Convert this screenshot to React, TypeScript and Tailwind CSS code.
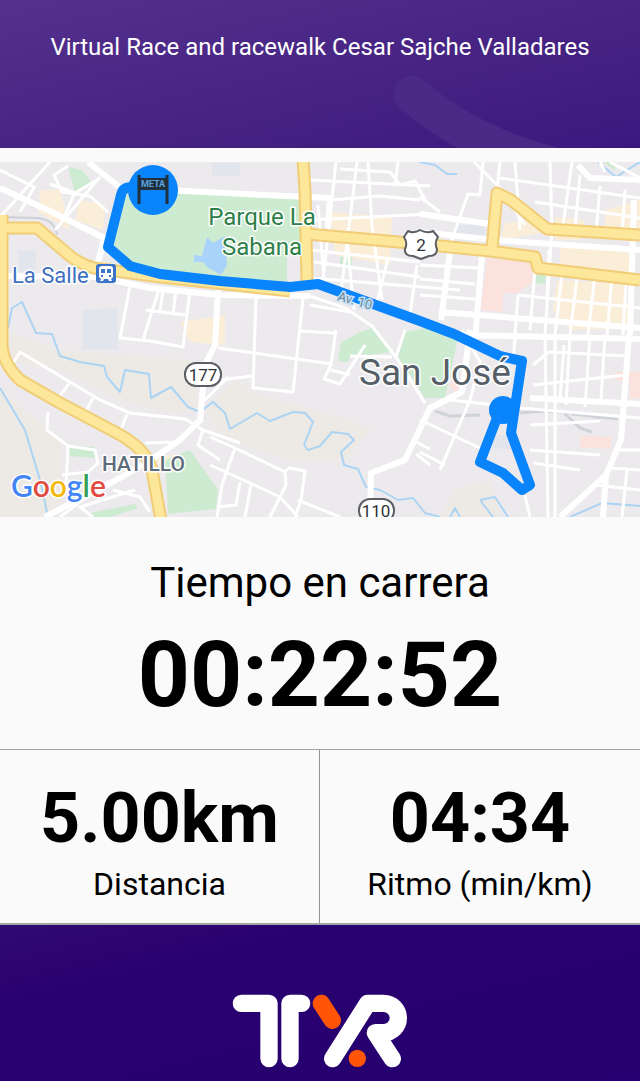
import React from 'react';

interface StatProps {
  value: string;
  label: string;
}

const minorRoads = [
  'M0 170 L34 187 M50 162 L0 217 M100 177 L55 230 M68 166 L54 175 L62 192 L90 196 M35 186 L20 212 M75 192 L62 222',
  'M90 196 L108 212 M50 184 L75 193 L100 178',
  'M130 286 L120 338 L150 341 L183 347 L190 290 M160 286 L146 330 L143 341 M146 310 L185 315 M163 290 L160 312 M176 290 L173 314',
  'M13 363 L20 352 L70 382 L100 400 L130 413 L185 419 L203 430 L240 443 M70 382 L60 396 M93 398 L84 415 M127 414 L120 432',
  'M48 412 L47 430 L68 446 L66 485 M68 446 L95 450 L98 463 L88 472 L62 475 M145 443 L175 442 L203 420',
  'M203 430 L198 445 L220 460 M113 490 L140 497 L150 512 M93 517 L80 507 L135 490 M60 517 L85 498',
  'M256 296 L253 388 L293 392 L303 298 M218 348 L332 364 M300 331 L334 333 M220 380 L252 376 M228 377 L205 400',
  'M336 330 L331 365 L324 379 L340 384 L365 345 M331 370 L350 375',
  'M310 296 L345 308 L372 326 L392 352 M372 326 L398 360 L425 403 M405 330 L396 357 M350 356 L392 357',
  'M210 437 L235 448 L285 472 L289 468 L305 471 L301 500 L295 517 M285 472 L286 485 L270 517 M235 448 L222 485 L217 517',
  'M210 465 L250 483 L280 497 L298 517 M298 500 L340 517 M240 482 L236 505 L218 507 M251 485 L245 517',
  'M336 162 L322 290 M357 162 L340 300 M368 162 L372 225 L382 300 M310 180 L430 186 M310 220 L430 214 M310 250 L420 262',
  'M346 230 L354 310 M310 278 L460 290 M388 258 L375 310 M417 265 L410 315 M314 262 L420 277 M340 169 L390 172 L400 185 L415 181 L427 203',
  'M310 305 L350 312 M318 205 L325 290 M398 162 L395 185 M330 200 L380 196 L420 200',
  'M483 162 L480 195 L468 194 L450 245 M474 162 L500 188 L525 225 M500 162 L496 200 M550 162 L552 230 L545 335 M572 162 L563 225',
  'M580 175 L575 228 M600 186 L596 232 M625 190 L622 235 M500 178 L640 198 M535 202 L640 218 M420 197 L440 212',
  'M420 265 L480 268 M420 279 L475 284 M420 295 L475 299 M518 295 L640 308 M518 295 L515 335 M563 265 L555 335 M578 270 L570 335',
  'M595 275 L588 335 M612 275 L607 335 M535 270 L530 330 M626 282 L623 335 M549 250 L547 300',
  'M545 335 L548 517 M555 335 L555 517 M570 335 L566 405 M590 335 L585 407 M605 335 L601 400 M515 338 L513 362 M533 365 L549 352 L628 356',
  'M450 400 L520 408 L640 418 M462 330 L480 362 L470 400 L440 470 M420 452 L445 465 M530 450 L600 455 M533 463 L580 470 M420 420 L480 448',
  'M533 385 L625 375 M530 425 L600 421 M525 495 L530 517 M615 450 L640 450 M640 470 L610 468 M627 470 L622 517 M595 485 L640 490 M564 345 L560 400',
  'M412 440 L430 449 M416 454 L430 465 M515 162 L520 230 M610 162 L640 178 M600 162 L605 172',
];

const mainRoads = [
  'M0 188 L52 212 L108 240',
  'M88 162 L123 190',
  'M165 190 L225 193 L330 198 L328 228',
  'M105 235 L98 262 M0 276 L98 277 L150 288 L220 295 L310 296',
  'M218 290 L215 345 L205 365 L200 420 L180 440 L155 457 L120 478 L45 517',
  'M370 517 L371 473 L405 460 L430 408 L462 392 L470 330',
  'M420 214 L490 224 M420 232 L495 240 L640 250 M440 312 L640 328 M450 252 L441 320 M482 255 L475 340 M460 335 L640 339',
  'M640 180 L590 178 L578 165 M634 200 L630 335 M629 335 L621 440 L606 475 L603 517 M606 475 L560 517 M530 398 L640 404',
];

const highways = [
  'M0 228 L37 228 L70 256 Q80 264 94 268 L160 277 L290 291',
  'M2 215 L2 345 Q3 364 20 380 L60 403 L115 432 Q146 448 152 470 L161 520',
  'M303 160 L305 190 L307 282',
  'M307 234 L410 243 L490 251 L535 257 L538 268 L640 280',
  'M492 250 L497 193 L511 200 L547 229 L640 235',
];

const rivers = [
  'M8 328 L12 308 L22 302 L36 333 L52 334 L60 356 L80 362 L104 366 L107 377 L120 392 L125 370 L149 374 L151 398 L171 387 L188 407 L200 412 L213 402 L225 413 L230 429 L257 413 L270 421 L293 412 L305 413 L313 422 L304 445 L308 450 L320 446 L332 432 L348 434 L354 440 L341 452 L344 465 L358 469 L366 487 L380 490 L398 500 L413 498 L425 513 L440 517',
  'M0 388 L25 430 L40 480 L48 517',
  'M450 517 L455 508 L460 517 M480 500 L495 497 L508 517 M480 500 L493 517 M570 517 L602 503 L640 506',
  'M420 162 L435 165 L447 174 L457 174 M598 162 L616 177 L640 162',
];

const route =
  'M153 187 L130 187 Q122 188 121 195 L108 247 L130 266 L160 274 L220 281 L290 287 L318 284 L420 321 L454 334 L500 356 L522 361 L511 433 L530 485 L522 490 L503 473 L480 462 L500 410';

const RouteMap: React.FC = () => (
  <svg
    viewBox="0 162 640 355"
    className="block w-full font-[Roboto,sans-serif]"
    role="img"
    aria-label="Mapa del recorrido"
  >
    <rect y="162" width="640" height="355" fill="#edeaee" />

    {/* land use */}
    <g fill="#edeae5">
      <path d="M0 330 L60 350 L190 360 L200 405 L180 415 L120 400 L60 370 L0 360Z" />
      <path d="M235 380 L260 395 L350 420 L370 430 L345 460 L290 460 L225 440 L205 410Z" />
      <path d="M0 390 L60 440 L60 517 L0 517Z M455 490 L490 480 L500 517 L440 517Z" />
    </g>
    <g fill="#faeed8">
      <path d="M40 190 L60 190 L70 230 L38 212Z M80 200 L105 205 L103 230 L75 220Z" />
      <path d="M180 322 L225 315 L225 345 L190 342Z M330 212 L392 217 L390 265 L335 255Z" />
      <path d="M505 223 L530 220 L545 232 L500 240Z M555 217 L585 220 L580 240 L555 240Z M605 210 L640 200 L640 238 L605 235Z" />
      <path d="M560 245 L630 252 L630 275 L560 268Z M557 280 L625 284 L630 328 L570 330 L553 310Z M150 455 L175 455 L165 470Z" />
    </g>
    <g fill="#fbe2dc">
      <path d="M487 258 L530 262 L533 282 L515 294 L503 292 L503 312 L481 310Z" />
      <path d="M580 436 L612 437 L610 449 L580 447Z M615 372 L640 372 L640 398 L630 398 L630 382 L615 380Z M449 385 L458 376 L458 395Z" />
    </g>
    <g fill="#e2e6ec">
      <path d="M18 250 L36 250 L36 272 L18 272Z M82 310 L118 308 L118 350 L82 350Z M212 163 L240 163 L240 176 L212 176Z" />
      <path d="M455 225 L485 225 L485 237 L455 235Z M495 435 L512 435 L512 450 L492 448Z" />
    </g>
    <g fill="#cdebd0">
      <path d="M123 190 L300 198 L302 250 L287 250 L287 284 L220 280 L135 264 L108 245Z" />
      <path d="M68 167 L82 170 L92 183 L75 192Z M358 333 L375 327 L392 352 L350 357 L348 362 L338 361 L341 343Z" />
      <path d="M405 332 L430 327 L458 338 L445 398 L425 398 L398 357Z M340 257 L352 257 L352 269 L340 269Z" />
      <path d="M533 274 L546 275 L545 284 L533 283Z M603 162 L615 162 L615 170Z M68 446 L95 447 L95 458 L70 456Z" />
      <path d="M165 460 L190 450 L218 490 L216 509 L168 514Z M90 513 L135 504 L138 508 L110 517 L92 517Z" />
    </g>
    <path
      d="M194 255 L202 256 L207 237 L213 243 L225 236 L227 265 L221 275 L207 267 L203 262 L194 262Z"
      fill="#a9d3fa"
    />
    <path
      d="M435 411 L450 416 L480 415 M520 413 Q560 408 600 418 M562 411 L580 428 L592 432 M572 414 L618 419"
      fill="none"
      stroke="#cfd3d8"
      strokeWidth="3"
    />
    <path d="M0 217 L38 218 Q55 220 57 235" fill="none" stroke="#cdd0d4" strokeWidth="2" />

    <g fill="none" stroke="#abd4f4" strokeWidth="2" strokeLinejoin="round">
      {rivers.map((d) => (
        <path key={d} d={d} />
      ))}
    </g>
    <g fill="none" stroke="#fff" strokeLinejoin="round">
      {minorRoads.map((d) => (
        <path key={d} d={d} strokeWidth="3" />
      ))}
      {mainRoads.map((d) => (
        <path key={d} d={d} strokeWidth="6" />
      ))}
    </g>
    <g fill="none" strokeLinejoin="round">
      {highways.map((d) => (
        <path key={d} d={d} stroke="#f0cd76" strokeWidth="13" />
      ))}
      {highways.map((d) => (
        <path key={d} d={d} stroke="#fde79a" strokeWidth="9" />
      ))}
    </g>

    <path d={route} fill="none" stroke="#0a84fb" strokeWidth="10" strokeLinejoin="round" />
    <circle cx="503" cy="410" r="14" fill="#0a84fb" />
    <circle cx="153" cy="190" r="25" fill="#0a84fb" />

    {/* finish banner */}
    <path d="M138 178 H168 V190 H138Z" fill="#20303c" />
    <path d="M139 175 V204 M167 175 V204" stroke="#20303c" strokeWidth="3" />
    <text x="153" y="187" fontSize="9" fontWeight="700" fill="#5aa2dd" textAnchor="middle">
      META
    </text>

    {/* road shields */}
    <path
      d="M408 231 Q414 234 420 230 Q427 234 433 231 L438 237 Q434 243 437 249 Q437 256 429 256 L421 259 L413 256 Q404 256 405 249 Q408 243 404 237Z"
      fill="#fff"
      stroke="#5b5f63"
      strokeWidth="2"
      strokeLinejoin="round"
    />
    <rect x="185" y="363" width="36" height="23" rx="11" fill="#fff" stroke="#5b5f63" strokeWidth="2" />
    <rect x="359" y="499" width="35" height="23" rx="11" fill="#fff" stroke="#5b5f63" strokeWidth="2" />
    <g fontSize="17" fill="#2f3336" textAnchor="middle">
      <text x="421" y="251">2</text>
      <text x="203" y="381">177</text>
      <text x="376" y="517">110</text>
    </g>

    {/* place names */}
    <g stroke="#fff" strokeWidth="3" strokeLinejoin="round" paintOrder="stroke">
      <g fontSize="24" fill="#2c8048" textAnchor="middle">
        <text x="262" y="225">Parque La</text>
        <text x="262" y="255">Sabana</text>
      </g>
      <text x="12" y="283" fontSize="22" fill="#3b6fc0">
        La Salle
      </text>
      <text x="359" y="385" fontSize="37" fill="#565f68">
        San José
      </text>
      <text x="102" y="471" fontSize="21" fontWeight="500" fill="#5d6c7b">
        HATILLO
      </text>
      <text
        x="11"
        y="497"
        fontSize="30"
        fontWeight="600"
        className="font-[Lato,sans-serif]"
      >
        <tspan fill="#4285f4">G</tspan>
        <tspan fill="#e04a3f">o</tspan>
        <tspan fill="#f2b90f">o</tspan>
        <tspan fill="#4285f4">g</tspan>
        <tspan fill="#34a056">l</tspan>
        <tspan fill="#e04a3f">e</tspan>
      </text>
    </g>
    <text
      x="337"
      y="300"
      fontSize="13"
      fill="#6f8796"
      stroke="#c5e2f8"
      strokeWidth="3"
      paintOrder="stroke"
      transform="rotate(16 337 300)"
    >
      Av. 10
    </text>

    {/* train station */}
    <rect x="96" y="264" width="20" height="19" rx="3" fill="#3b73c8" />
    <path d="M102 266 H110 Q113 266 113 269 V277 L111 279 L112 281 H109 L108 279 H104 L103 281 H100 L101 279 L99 277 V269 Q99 266 102 266Z" fill="#fff" />
    <path d="M101 269 H105 V273 H101Z M107 269 H111 V273 H107Z M101 275 H103 V277 H101Z M109 275 H111 V277 H109Z" fill="#3b73c8" />
  </svg>
);

const TyrLogo: React.FC = () => (
  <svg viewBox="36 41 528 222" className="w-44" role="img" aria-label="TYR">
    <g fill="none" stroke="#fff" strokeWidth="52" strokeLinecap="round" strokeLinejoin="round">
      <path d="M64 69 H147 V235" />
      <path d="M245 69 H210 V235" />
      <path d="M338 235 L443 69 H491 A44 44 0 0 1 491 157 H466 L517 235" />
      <path d="M304 69 L337 120" stroke="#ff5505" />
    </g>
    <circle cx="412" cy="234" r="26" fill="#ff5505" />
  </svg>
);

const Stat: React.FC<StatProps> = ({ value, label }) => (
  <div className="flex flex-col items-center pt-8 pb-[19px]">
    <span className="text-[70px] leading-[72px] font-bold">{value}</span>
    <span className="mt-2.5 text-[32px] leading-10">{label}</span>
  </div>
);

export default function App() {
  return (
    <div className="flex min-h-screen flex-col bg-[#290070] font-[Roboto,sans-serif] text-black">
      <header className="relative overflow-hidden bg-linear-to-br from-[#54318e] via-[#482584] to-[#3b187e] px-4 pt-8 pb-[86px] text-center">
        <svg viewBox="0 0 640 148" className="absolute inset-0 h-full w-full" aria-hidden="true">
          <path
            d="M412 94 Q475 150 580 172"
            fill="none"
            stroke="#4b2986"
            strokeWidth="37"
            strokeLinecap="round"
          />
        </svg>
        <h1 className="relative text-2xl leading-[30px] text-white">
          Virtual Race and racewalk Cesar Sajche Valladares
        </h1>
      </header>

      <main className="bg-[#fafafa]">
        <div className="pt-[14px]">
          <RouteMap />
        </div>

        <section className="flex flex-col items-center pt-10 pb-[22px]">
          <h2 className="text-[42px] leading-[52px]">Tiempo en carrera</h2>
          <p className="mt-[14px] text-[91px] leading-[104px] font-bold">00:22:52</p>
        </section>

        <section className="grid grid-cols-2 divide-x divide-[#929292] border-t border-b-2 border-[#a4a4a4]">
          <Stat value="5.00km" label="Distancia" />
          <Stat value="04:34" label="Ritmo (min/km)" />
        </section>
      </main>

      <footer className="flex flex-1 justify-center bg-linear-to-br from-[#310973] via-[#290070] via-30% to-[#260070] pt-[68px] pb-3">
        <TyrLogo />
      </footer>
    </div>
  );
}
